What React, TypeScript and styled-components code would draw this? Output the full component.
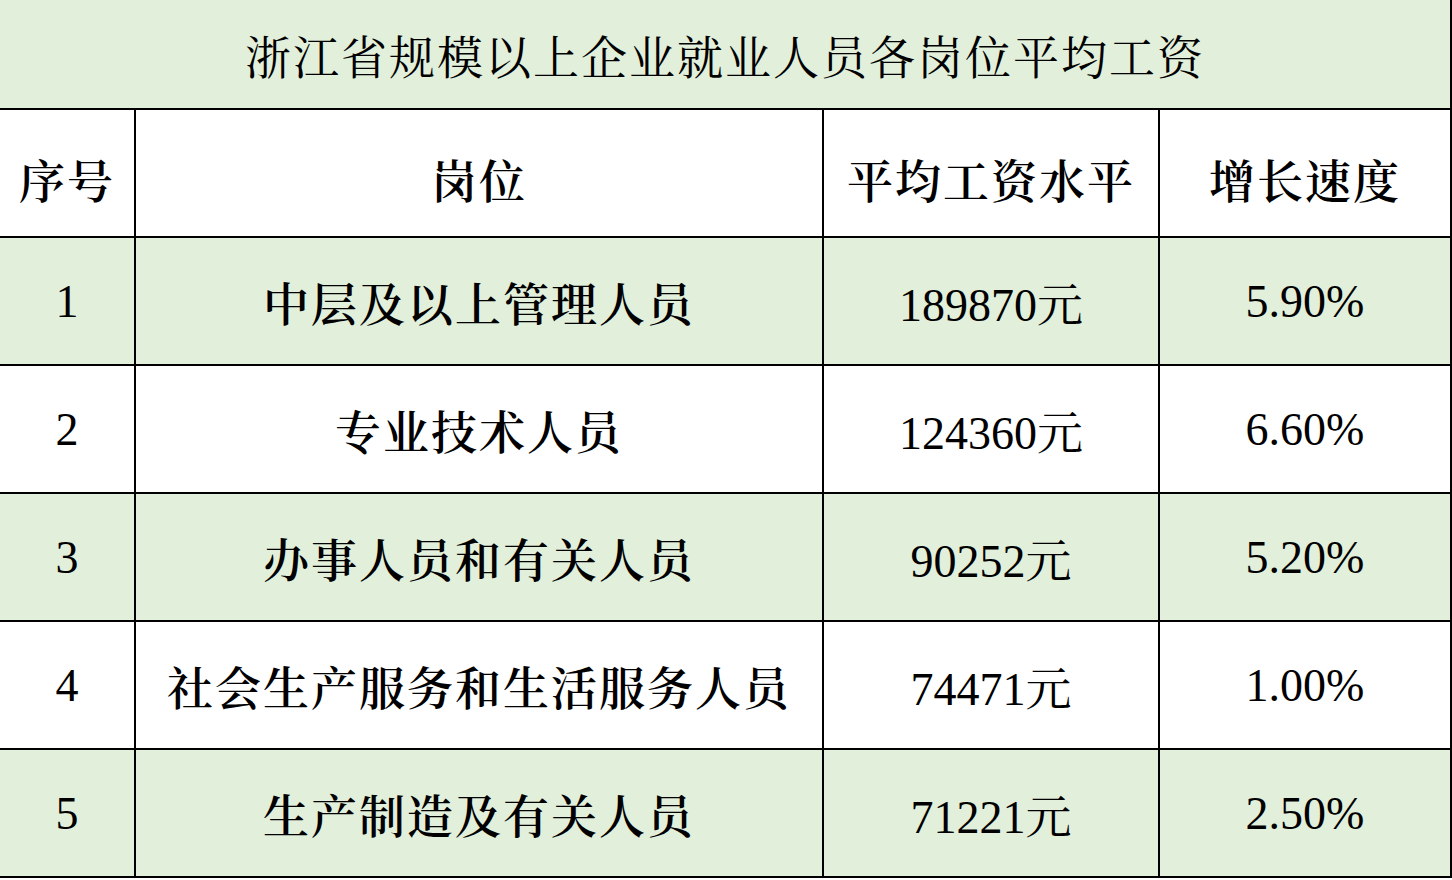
import styled, { createGlobalStyle } from "styled-components";

const GlobalStyle = createGlobalStyle`
  html, body {
    margin: 0;
    padding: 0;
    background: #ffffff;
  }
  body {
    font-family: "Liberation Serif", "Noto Serif CJK SC", "Noto Sans CJK SC", serif;
    color: #000;
  }
`;

const Table = styled.table`
  border-collapse: collapse;
  table-layout: fixed;
  width: 1451px;
  font-family: "Liberation Serif", "Noto Serif CJK SC", "Noto Sans CJK SC", serif;
`;

const TitleCell = styled.td`
  height: 108px;
  padding: 0;
  background: #e2efda;
  border-right: 2px solid #000;
  border-bottom: 2px solid #000;
  text-align: center;
  font-family: "Liberation Serif", "Noto Serif CJK SC", "Noto Sans CJK SC", serif;
  font-size: 46px;
  font-weight: 400;
  letter-spacing: 2px;
`;

const Cell = styled.td<{ $green?: boolean; $first?: boolean; $weight?: number; $cjk?: boolean }>`
  height: 126px;
  padding: 0;
  text-align: center;
  vertical-align: middle;
  background: ${(p) => (p.$green ? "#e2efda" : "#ffffff")};
  border-right: 2px solid #000;
  border-bottom: 2px solid #000;
  border-left: ${(p) => (p.$first ? "none" : "2px solid #000")};
  font-family: "Liberation Serif", "Noto Serif CJK SC", "Noto Sans CJK SC", serif;
  font-size: 46px;
  font-weight: ${(p) => p.$weight ?? 400};
  letter-spacing: ${(p) => (p.$cjk ? "2px" : "0")};
`;

const HeadText = styled.span`
  display: inline-block;
  padding-top: 10px;
`;

const rows = [
  { no: "1", post: "中层及以上管理人员", wage: "189870元", growth: "5.90%" },
  { no: "2", post: "专业技术人员", wage: "124360元", growth: "6.60%" },
  { no: "3", post: "办事人员和有关人员", wage: "90252元", growth: "5.20%" },
  { no: "4", post: "社会生产服务和生活服务人员", wage: "74471元", growth: "1.00%" },
  { no: "5", post: "生产制造及有关人员", wage: "71221元", growth: "2.50%" },
];

const headers = ["序号", "岗位", "平均工资水平", "增长速度"];

export default function App() {
  return (
    <>
      <GlobalStyle />
      <Table>
        <colgroup>
          <col style={{ width: 135 }} />
          <col style={{ width: 688 }} />
          <col style={{ width: 336 }} />
          <col style={{ width: 292 }} />
        </colgroup>
        <tbody>
          <tr>
            <TitleCell colSpan={4}>浙江省规模以上企业就业人员各岗位平均工资</TitleCell>
          </tr>
          <tr>
            {headers.map((h, i) => (
              <Cell key={h} $first={i === 0} $weight={600} $cjk>
                <HeadText>{h}</HeadText>
              </Cell>
            ))}
          </tr>
          {rows.map((r, i) => (
            <tr key={r.no}>
              <Cell $first $green={i % 2 === 0}>
                {r.no}
              </Cell>
              <Cell $green={i % 2 === 0} $weight={600} $cjk>
                {r.post}
              </Cell>
              <Cell $green={i % 2 === 0}>{r.wage}</Cell>
              <Cell $green={i % 2 === 0}>{r.growth}</Cell>
            </tr>
          ))}
        </tbody>
      </Table>
    </>
  );
}
